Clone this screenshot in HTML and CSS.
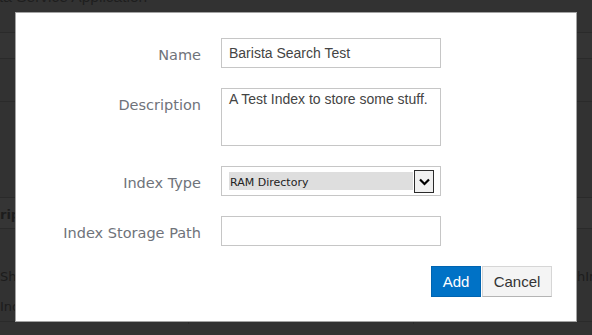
FILE: index.html
```html
<!DOCTYPE html>
<html lang="en">
<head>
  <meta charset="UTF-8">
  <title>Barista Service Application - Add Index</title>
  <link rel="stylesheet" href="styles.css">
</head>
<body>
  <!-- Sayfa arka planı (karartılmış) -->
  <div class="page">
    <div class="page-title">ta Service Application</div>
    <div class="band band-a"></div>
    <div class="band band-b"></div>
    <div class="band band-c"></div>
    <div class="table-head"><span>rip</span></div>
    <div class="table-row"><span>Sha</span><span class="cell-right">hIn</span></div>
    <div class="table-row short"><span>Ind</span></div>
    <div class="table-row last"><span>dfsadf</span><span class="cell-mid">RAM Directory</span></div>
  </div>

  <!-- Diyalog -->
  <div class="dialog">
    <form class="form-grid">
      <label class="label" for="nameInput">Name</label>
      <input class="field" type="text" id="nameInput" value="Barista Search Test">

      <label class="label" for="descInput">Description</label>
      <textarea class="field area" id="descInput">A Test Index to store some stuff.</textarea>

      <label class="label">Index Type</label>
      <div class="field select">
        <span class="select-value">RAM Directory</span>
        <span class="select-btn">
          <svg width="13" height="9" viewBox="0 0 13 9"><path d="M2 2.5 L6.5 7 L11 2.5" fill="none" stroke="#000" stroke-width="2.2"/></svg>
        </span>
      </div>

      <label class="label" for="pathInput">Index Storage Path</label>
      <input class="field" type="text" id="pathInput" value="">
    </form>
    <div class="actions">
      <button class="btn btn-primary">Add</button>
      <button class="btn btn-cancel">Cancel</button>
    </div>
  </div>
</body>
</html>
```

FILE: styles.css
```css
* { margin: 0; padding: 0; box-sizing: border-box; }
body {
  font-family: "DejaVu Sans", Verdana, sans-serif;
  background: #323232;
  overflow: hidden;
}
/* Arka plan sayfası */
.page {
  height: 335px;
  color: #1c1c1c;
  font-size: 13px;
}
.page-title {
  height: 44px;
  margin-top: -11px;
  margin-left: -1px;
  font-family: "Liberation Sans", Arial, sans-serif;
  font-size: 15.5px;
  line-height: 15px;
  color: #1e1e1e;
  border-bottom: 1px solid #2a2a2a;
}
.band { border-bottom: 1px solid #2a2a2a; }
.band-a { height: 26px; background: #343434; }
.band-b { height: 43px; }
.band-c { height: 96px; }
.table-head {
  height: 31px;
  border-bottom: 1px solid #2a2a2a;
  background: #353535;
  font-weight: bold;
  padding-top: 9px;
}
.table-row {
  height: 62px;
  padding-top: 40px;
  position: relative;
}
.table-row.short { height: 30px; padding-top: 8px; }
.table-row.last {
  height: 30px;
  padding-top: 2px;
  border-top: 1px solid #2a2a2a;
}
.cell-right { position: absolute; left: 577px; top: 40px; }
.cell-mid {
  position: absolute;
  left: 188px;
  top: 0;
  height: 30px;
  padding: 3px 0 0 8px;
  width: 226px;
  border-left: 1px solid #2a2a2a;
  border-right: 1px solid #2a2a2a;
}
/* Diyalog */
.dialog {
  position: absolute;
  left: 15px;
  top: 12px;
  width: 562px;
  height: 310px;
  background: #fff;
  border: 1px solid #a3a3a3;
  padding: 25px 24px 0 0;
}
.form-grid {
  display: grid;
  grid-template-columns: 185px 220px;
  column-gap: 20px;
  row-gap: 20px;
}
.label {
  text-align: right;
  font-size: 14.5px;
  line-height: 16px;
  padding-top: 9px;
  color: #6f737a;
}
.field {
  width: 220px;
  height: 30px;
  border: 1px solid #c6c6c6;
  background: #fff;
  padding: 0 7px;
  font-family: "Liberation Sans", Arial, sans-serif;
  font-size: 14px;
  color: #444;
  outline: none;
}
.area {
  height: 58px;
  resize: none;
  padding: 1px 7px;
  line-height: 18px;
  overflow: hidden;
}
.select {
  display: flex;
  align-items: center;
  padding: 0 6px 0 7px;
}
.select-value {
  flex: 1;
  height: 18px;
  background: #dedede;
  font-family: "DejaVu Sans", Verdana, sans-serif;
  font-size: 11px;
  line-height: 21px;
  color: #222;
  padding-left: 1px;
}
.select-btn {
  width: 20px;
  height: 23px;
  border: 1px solid #2b2b2b;
  background: #f0f0f0;
  display: flex;
  align-items: center;
  justify-content: center;
  margin-left: 1px;
}
.actions {
  display: flex;
  justify-content: flex-end;
  margin-top: 20px;
  gap: 1px;
}
.btn {
  height: 31px;
  padding: 0;
  font-family: "Liberation Sans", Arial, sans-serif;
  font-size: 15px;
  color: #333;
  background: #f4f4f4;
  border: 1px solid #d6d6d6;
  border-bottom-color: #b4b4b4;
  cursor: pointer;
}
.btn-primary {
  width: 50px;
  background: #0072c6;
  border-color: #0064b0;
  color: #fff;
}
.btn-cancel { width: 70px; }
```
